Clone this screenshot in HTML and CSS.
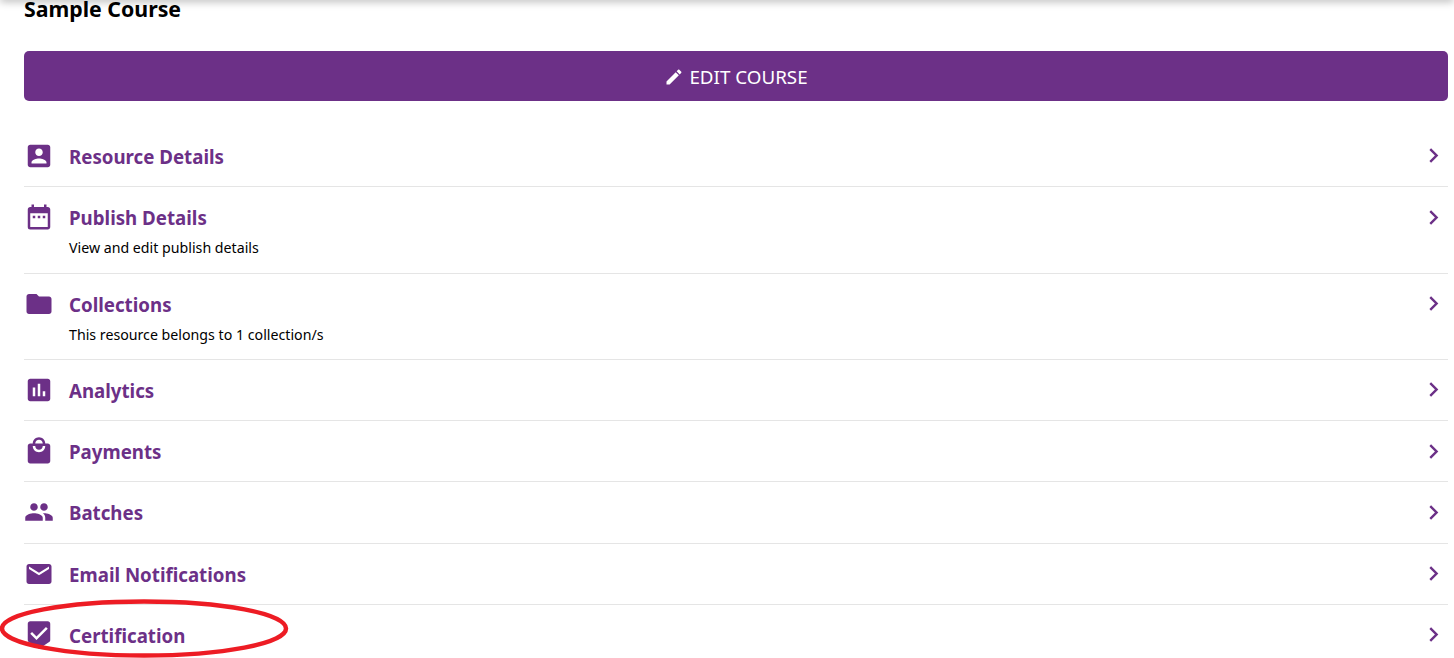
FILE: index.html
```html
<!DOCTYPE html>
<html lang="en">
<head>
<meta charset="utf-8">
<title>Sample Course</title>
<link rel="stylesheet" href="styles.css">
</head>
<body>
<div class="top-shadow"></div>
<main class="page">
  <h1 class="course-title">Sample Course</h1>
  <a class="edit-btn" href="#">
    <svg class="edit-icon" viewBox="0 0 24 24"><path d="M3 17.25V21h3.75L17.81 9.94l-3.75-3.75L3 17.25zM20.71 7.04c.39-.39.39-1.02 0-1.41l-2.34-2.34c-.39-.39-1.02-.39-1.41 0l-1.83 1.83 3.75 3.75 1.83-1.83z"/></svg>
    <span>EDIT COURSE</span>
  </a>
  <ul class="menu">
    <li class="row">
      <svg class="row-icon" viewBox="0 0 24 24"><path d="M3 5v14c0 1.1.89 2 2 2h14c1.1 0 2-.9 2-2V5c0-1.1-.9-2-2-2H5c-1.11 0-2 .9-2 2zm12 4c0 1.66-1.34 3-3 3s-3-1.34-3-3 1.34-3 3-3 3 1.34 3 3zm-9 8c0-2 4-3.1 6-3.1s6 1.1 6 3.1v1H6v-1z"/></svg>
      <div class="row-text"><div class="row-title">Resource Details</div></div>
      <svg class="chevron" viewBox="0 0 24 24"><path d="M10 6L8.59 7.41 13.17 12l-4.58 4.59L10 18l6-6z"/></svg>
    </li>
    <li class="row">
      <svg class="row-icon" viewBox="0 0 24 24"><path d="M19 4h-1V2h-2v2H8V2H6v2H5c-1.11 0-1.99.9-1.99 2L3 20a2 2 0 0 0 2 2h14c1.1 0 2-.9 2-2V6c0-1.1-.9-2-2-2zm0 16H5V9h14v11zM9 13H7v-2h2v2zm4 0h-2v-2h2v2zm4 0h-2v-2h2v2z"/></svg>
      <div class="row-text"><div class="row-title">Publish Details</div><div class="row-sub">View and edit publish details</div></div>
      <svg class="chevron" viewBox="0 0 24 24"><path d="M10 6L8.59 7.41 13.17 12l-4.58 4.59L10 18l6-6z"/></svg>
    </li>
    <li class="row">
      <svg class="row-icon" viewBox="0 0 24 24"><path d="M10 4H4c-1.1 0-1.99.9-1.99 2L2 18c0 1.1.9 2 2 2h16c1.1 0 2-.9 2-2V8c0-1.1-.9-2-2-2h-8l-2-2z"/></svg>
      <div class="row-text"><div class="row-title">Collections</div><div class="row-sub">This resource belongs to 1 collection/s</div></div>
      <svg class="chevron" viewBox="0 0 24 24"><path d="M10 6L8.59 7.41 13.17 12l-4.58 4.59L10 18l6-6z"/></svg>
    </li>
    <li class="row">
      <svg class="row-icon" viewBox="0 0 24 24"><path d="M19 3H5c-1.1 0-2 .9-2 2v14c0 1.1.9 2 2 2h14c1.1 0 2-.9 2-2V5c0-1.1-.9-2-2-2zM9 17H7v-7h2v7zm4 0h-2V7h2v10zm4 0h-2v-4h2v4z"/></svg>
      <div class="row-text"><div class="row-title">Analytics</div></div>
      <svg class="chevron" viewBox="0 0 24 24"><path d="M10 6L8.59 7.41 13.17 12l-4.58 4.59L10 18l6-6z"/></svg>
    </li>
    <li class="row">
      <svg class="row-icon" viewBox="0 0 24 24"><path d="M19 6h-2c0-2.76-2.24-5-5-5S7 3.24 7 6H5c-1.1 0-1.99.9-1.99 2L3 20c0 1.1.9 2 2 2h14c1.1 0 2-.9 2-2V8c0-1.1-.9-2-2-2zm-7-3c1.66 0 3 1.34 3 3H9c0-1.66 1.34-3 3-3zm0 10c-2.76 0-5-2.24-5-5h2c0 1.66 1.34 3 3 3s3-1.34 3-3h2c0 2.76-2.24 5-5 5z"/></svg>
      <div class="row-text"><div class="row-title">Payments</div></div>
      <svg class="chevron" viewBox="0 0 24 24"><path d="M10 6L8.59 7.41 13.17 12l-4.58 4.59L10 18l6-6z"/></svg>
    </li>
    <li class="row">
      <svg class="row-icon" viewBox="0 0 24 24"><path d="M16 11c1.66 0 2.99-1.34 2.99-3S17.66 5 16 5c-1.66 0-3 1.34-3 3s1.34 3 3 3zm-8 0c1.66 0 2.99-1.34 2.99-3S9.66 5 8 5C6.34 5 5 6.34 5 8s1.34 3 3 3zm0 2c-2.33 0-7 1.17-7 3.5V19h14v-2.5c0-2.33-4.67-3.5-7-3.5zm8 0c-.29 0-.62.02-.97.05 1.16.84 1.97 1.97 1.97 3.45V19h6v-2.5c0-2.33-4.67-3.5-7-3.5z"/></svg>
      <div class="row-text"><div class="row-title">Batches</div></div>
      <svg class="chevron" viewBox="0 0 24 24"><path d="M10 6L8.59 7.41 13.17 12l-4.58 4.59L10 18l6-6z"/></svg>
    </li>
    <li class="row">
      <svg class="row-icon" viewBox="0 0 24 24"><path d="M20 4H4c-1.1 0-1.99.9-1.99 2L2 18c0 1.1.9 2 2 2h16c1.1 0 2-.9 2-2V6c0-1.1-.9-2-2-2zm0 4l-8 5-8-5V6l8 5 8-5v2z"/></svg>
      <div class="row-text"><div class="row-title">Email Notifications</div></div>
      <svg class="chevron" viewBox="0 0 24 24"><path d="M10 6L8.59 7.41 13.17 12l-4.58 4.59L10 18l6-6z"/></svg>
    </li>
    <li class="row">
      <svg class="row-icon" viewBox="0 0 24 24"><path d="M19 1H5c-1.1 0-1.99.9-1.99 2L3 15.93c0 .69.35 1.3.88 1.66L12 23l8.11-5.41c.53-.36.88-.97.88-1.66L21 3c0-1.1-.9-2-2-2zm-9 15l-5-5 1.41-1.41L10 13.17l7.59-7.59L19 7l-9 9z"/></svg>
      <div class="row-text"><div class="row-title">Certification</div></div>
      <svg class="chevron" viewBox="0 0 24 24"><path d="M10 6L8.59 7.41 13.17 12l-4.58 4.59L10 18l6-6z"/></svg>
    </li>
  </ul>
</main>
<svg class="annotation" viewBox="0 0 290 62"><ellipse cx="144" cy="30.5" rx="142" ry="27"/></svg>
</body>
</html>
```

FILE: styles.css
```css
html, body {
  margin: 0;
  padding: 0;
  height: 658px;
  overflow: hidden;
  background: #fff;
  font-family: "Noto Sans", "Open Sans", sans-serif;
}
.top-shadow {
  position: fixed;
  top: -6px;
  left: 0;
  right: 0;
  height: 6px;
  box-shadow: 0 1px 8px rgba(0, 0, 0, 0.35);
}
.page {
  padding: 0 6px 0 24px;
}
.course-title {
  margin: 0;
  height: 51px;
  font-size: 21.3px;
  line-height: 18px;
  font-weight: 700;
  color: #000;
}
.edit-btn {
  display: flex;
  align-items: center;
  justify-content: center;
  gap: 5px;
  height: 49px;
  padding-top: 1px;
  border-radius: 5px;
  background: #6c3087;
  color: #fff;
  font-size: 18.8px;
  text-decoration: none;
}
.edit-icon {
  width: 20px;
  height: 20px;
  fill: #fff;
}
.menu {
  list-style: none;
  margin: 24.85px 0 0;
  padding: 0;
}
.row {
  display: flex;
  align-items: flex-start;
  padding: 15px 0;
  border-bottom: 1px solid #e5e5e5;
}
.row-icon {
  flex: none;
  width: 30px;
  height: 30px;
  margin-right: 15px;
  fill: #6c3087;
}
.row-text {
  flex: 1;
  min-width: 0;
}
.row-title {
  padding-top: 1px;
  font-size: 18.7px;
  line-height: 29.25px;
  font-weight: 700;
  color: #6c3087;
}
.row-sub {
  padding-top: 6px;
  font-size: 14.2px;
  line-height: 19.15px;
  color: #000;
}
.chevron {
  flex: none;
  width: 29px;
  height: 29px;
  margin-top: 0.5px;
  fill: #6c3087;
}
.annotation {
  position: fixed;
  left: 0;
  top: 598px;
  width: 290px;
  height: 62px;
  fill: none;
  stroke: #ed1c24;
  stroke-width: 4.5;
}
```
